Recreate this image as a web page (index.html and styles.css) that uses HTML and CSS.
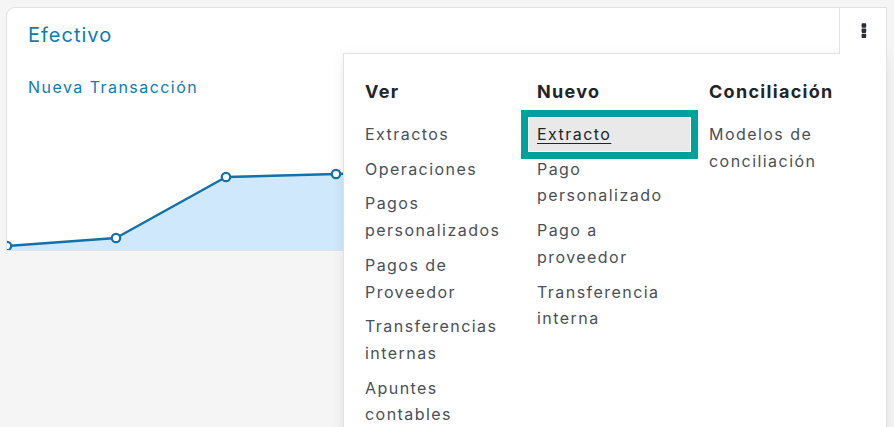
FILE: index.html
```html
<!DOCTYPE html>
<html lang="es">
<head>
<meta charset="utf-8">
<title>Efectivo</title>
<link rel="stylesheet" href="styles.css">
</head>
<body>
<div class="page">
  <div class="card">
    <div class="card-head">
      <h2 class="card-title">Efectivo</h2>
    </div>
    <div class="card-body">
      <a class="new-link" href="#">Nueva Transacción</a>
    </div>
    <svg class="chart" viewBox="0 0 879 101" preserveAspectRatio="none" aria-hidden="true">
      <polygon class="area" points="0,97 109,89 219,28 329,25 439,22 549,20 659,16 769,12 879,8 879,101 0,101"/>
      <polyline class="line" points="0,97 109,89 219,28 329,25 439,22 549,20 659,16 769,12 879,8"/>
      <circle class="pt" cx="0" cy="97" r="4.2"/>
      <circle class="pt" cx="109" cy="89" r="4.2"/>
      <circle class="pt" cx="219" cy="28" r="4.2"/>
      <circle class="pt" cx="329" cy="25" r="4.2"/>
      <circle class="pt" cx="439" cy="22" r="4.2"/>
      <circle class="pt" cx="549" cy="20" r="4.2"/>
      <circle class="pt" cx="659" cy="16" r="4.2"/>
      <circle class="pt" cx="769" cy="12" r="4.2"/>
    </svg>

    <div class="dropdown">
      <button class="toggle" type="button" aria-label="Más opciones">
        <svg width="6" height="16" viewBox="0 0 6 16"><rect x="0.6" y="0.3" width="4.6" height="4.4" rx="0.8"/><rect x="0.6" y="5.5" width="4.6" height="4.4" rx="0.8"/><rect x="0.6" y="10.7" width="4.6" height="4.4" rx="0.8"/></svg>
      </button>
      <div class="menu">
        <div class="col">
          <div class="col-head">Ver</div>
          <a class="item" href="#">Extractos</a>
          <a class="item" href="#">Operaciones</a>
          <a class="item" href="#">Pagos personalizados</a>
          <a class="item" href="#">Pagos de Proveedor</a>
          <a class="item" href="#">Transferencias internas</a>
          <a class="item" href="#">Apuntes contables</a>
        </div>
        <div class="col">
          <div class="col-head">Nuevo</div>
          <a class="item focus" href="#">Extracto</a>
          <a class="item" href="#">Pago personalizado</a>
          <a class="item" href="#">Pago a proveedor</a>
          <a class="item" href="#">Transferencia interna</a>
        </div>
        <div class="col">
          <div class="col-head">Conciliación</div>
          <a class="item" href="#">Modelos de conciliación</a>
        </div>
      </div>
    </div>
  </div>
</div>
</body>
</html>
```

FILE: styles.css
```css
* { box-sizing: border-box; }
html, body { margin: 0; height: 100%; }
body {
  background: #f5f5f5;
  font-family: Inter, "Open Sans", "Liberation Sans", sans-serif;
  color: #495057;
  overflow: hidden;
}
.page {
  padding: 7px 7px 0 6px;
}
.card {
  position: relative;
  height: 244px;
  background: #fff;
  border: 1px solid #dfe1e4;
  border-radius: 9px 0 0 0;
  display: flex;
  flex-direction: column;
}
.card-head {
  padding: 12px 21px 0;
}
.card-title {
  margin: 0;
  font-weight: 400;
  font-size: 20px;
  line-height: 30px;
  letter-spacing: 1px;
  color: #117ab5;
}
.card-body {
  padding: 25px 21px 0;
}
.new-link {
  font-size: 16px;
  line-height: 24px;
  letter-spacing: 1.45px;
  color: #117ab5;
  text-decoration: none;
}
.chart {
  display: block;
  margin-top: auto;
  width: 100%;
  height: 101px;
  overflow: hidden;
}
.area { fill: #cfe8fb; }
.line { fill: none; stroke: #1470a8; stroke-width: 2.4; stroke-linejoin: round; }
.pt { fill: #fff; stroke: #1470a8; stroke-width: 2.2; }

.dropdown {
  position: absolute;
  top: -1px;
  right: -1px;
}
.toggle {
  position: relative;
  z-index: 3;
  display: flex;
  align-items: center;
  justify-content: center;
  width: 48px;
  height: 47px;
  padding: 0 0 0 1px;
  margin: 0;
  background: #fff;
  border: 1px solid #dfe1e4;
  border-bottom: none;
  cursor: pointer;
}
.toggle svg { fill: #2b2f33; margin-top: -1px; }
.menu {
  position: absolute;
  z-index: 2;
  top: 46px;
  right: 0;
  width: 544px;
  height: 400px;
  background: #fff;
  border: 1px solid #dfe1e4;
  box-shadow: 0 3px 12px rgba(0, 0, 0, 0.08);
  padding: 24px 0 0 13px;
  display: flex;
  gap: 11px;
}
.col {
  width: 161px;
  display: flex;
  flex-direction: column;
  gap: 2px;
}
.col-head {
  padding: 0 8px;
  font-size: 18px;
  line-height: 27px;
  font-weight: 700;
  letter-spacing: 1.3px;
  color: #212529;
  margin-bottom: 11px;
}
.item {
  display: block;
  padding: 3px 8px;
  font-size: 16px;
  line-height: 26.7px;
  letter-spacing: 1.45px;
  color: #4a5056;
  text-decoration: none;
}
.item.focus {
  background: #e9e9e9;
  color: #212529;
  text-decoration: underline;
  text-underline-offset: 3px;
  box-shadow: 0 0 0 1px #fafafa, 0 0 0 8px #00a19a;
}
```
